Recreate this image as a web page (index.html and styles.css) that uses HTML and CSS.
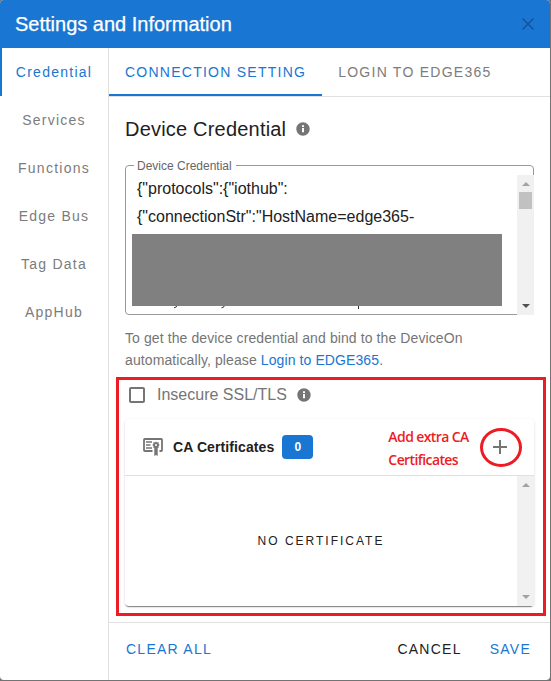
FILE: index.html
```html
<!DOCTYPE html>
<html lang="en">
<head>
<meta charset="utf-8">
<title>Settings and Information</title>
<link rel="stylesheet" href="styles.css">
</head>
<body>
<div class="dialog">
  <header class="titlebar">
    <h1>Settings and Information</h1>
    <svg class="close" width="12" height="12" viewBox="0 0 12 12"><path d="M.5.5l11 11M11.5.5l-11 11"/></svg>
  </header>
  <div class="body">
    <nav class="side">
      <a class="active">Credential</a>
      <a>Services</a>
      <a>Functions</a>
      <a>Edge Bus</a>
      <a>Tag Data</a>
      <a>AppHub</a>
    </nav>
    <main class="main">
      <div class="tabs">
        <a class="tab active">CONNECTION SETTING</a>
        <a class="tab">LOGIN TO EDGE365</a>
      </div>
      <section class="content">
        <h2><span>Device Credential</span>
          <svg class="info" width="16" height="16" viewBox="0 0 24 24"><path d="M12 2C6.48 2 2 6.48 2 12s4.480 10 10 10 10-4.480 10-10S17.520 2 12 2zm1.500 15h-3v-6.500h3zm0-8h-3V6.500h3z"/></svg>
        </h2>
        <div class="field">
          <label>Device Credential</label>
          <div class="value"><div>{"protocols":{"iothub":</div><div>{"connectionStr":"HostName=edge365-</div></div>
          <div class="redacted"></div>
          <svg class="remnants" width="200" height="3" viewBox="0 0 200 3"><path d="M5.500 0v.8L3 1.800M53 0v.8l-2.500 1M187.500 0v3"/></svg>
          <div class="scroll">
            <i class="up"></i><i class="thumb"></i><i class="down dark"></i>
          </div>
        </div>
        <p class="helper">To get the device credential and bind to the DeviceOn<br>automatically, please <a>Login to EDGE365</a>.</p>
        <div class="check"><i class="box"></i><span>Insecure SSL/TLS</span>
          <svg class="info" width="16" height="16" viewBox="0 0 24 24"><path d="M12 2C6.480 2 2 6.480 2 12s4.480 10 10 10 10-4.480 10-10S17.520 2 12 2zm1.500 15h-3v-6.500h3zm0-8h-3V6.500h3z"/></svg>
        </div>
        <div class="card">
          <div class="card-head">
            <svg class="cert" width="20" height="18" viewBox="0 0 20 18"><path class="line" d="M9.500 13H1.800a.8.8 0 0 1-.8-.8V1.800A.8.8 0 0 1 1.800 1H18.200a.8.8 0 0 1 .8.8V12.200a.8.8 0 0 1-.8.8H16.500"/><path class="rows" d="M3 4h6M3 7h4.500M3 10h6"/><path d="M13 3.500l1 1 1.700-.5-.2 1.700 1.200 1.300-1.200 1.300.2 1.700-1-.3V18l-1.700-1-1.700 1V9.700l-1 .3.200-1.700L9.300 7l1.200-1.300L10.300 4l1.700.5z"/><circle cx="13" cy="7" r="1" fill="#fff"/></svg>
            <b>CA Certificates</b><span class="badge">0</span>
            <div class="note">Add extra CA<br>Certificates</div>
            <div class="add"><svg width="14" height="14" viewBox="0 0 14 14"><path d="M7 0v14M0 7h14"/></svg></div>
          </div>
          <div class="card-body"><span>NO CERTIFICATE</span>
            <div class="scroll"><i class="up"></i><i class="down"></i></div>
          </div>
        </div>
      </section>
      <footer><a>CLEAR ALL</a><a class="cancel">CANCEL</a><a>SAVE</a></footer>
    </main>
  </div>
  <div class="highlight"></div>
</div>
</body>
</html>
```

FILE: styles.css
```css
* { box-sizing: border-box; }
body { margin: 0; height: 681px; overflow: hidden; background: #737373; font-family: "Liberation Sans", Arial, sans-serif; }
h1, h2, p { margin: 0; font-weight: 400; }
.dialog { position: relative; width: 550px; height: 680px; background: #fff; border-radius: 4px; overflow: hidden; display: flex; flex-direction: column; }
.titlebar { height: 48px; background: #1976d2; display: flex; align-items: center; justify-content: space-between; padding: 0 16px 0 15px; }
h1 { color: #fff; font-size: 20px; -webkit-text-stroke: .25px #fff; white-space: nowrap; }
.close { fill: none; stroke: #145096; stroke-width: 1.3; }
.body { flex: 1; display: flex; }
.side { width: 109px; border-right: 1px solid #e0e0e0; }
.side a { display: flex; height: 48px; align-items: center; justify-content: center; font-size: 14px; letter-spacing: 1.25px; color: #7c7c7c; }
.side a.active { color: #1976d2; border-left: 2px solid #1976d2; padding-right: 2px; }
.main { flex: 1; display: flex; flex-direction: column; min-width: 0; }
.tabs { height: 49px; display: flex; border-bottom: 1px solid #e0e0e0; }
.tab { height: 48px; padding: 0 16px; display: flex; align-items: center; font-size: 14px; letter-spacing: 1.25px; color: #7c7c7c; white-space: nowrap; }
.tab.active { color: #1976d2; box-shadow: inset 0 -2px #1976d2; }
.content { height: 525px; padding: 16px 16px 0; }
h2 { height: 32px; display: flex; align-items: center; font-size: 20px; letter-spacing: .2px; color: #212121; }
.info { fill: #757575; margin-left: 9px; }
.field { position: relative; height: 150px; width: 409px; margin-top: 20px; border: 1px solid #999; border-radius: 4px; }
.field label { position: absolute; left: 8px; top: -7px; padding: 0 4px 0 3px; background: #fff; font-size: 12px; line-height: 14px; color: #666; white-space: nowrap; }
.value { padding: 9px 0 0 11px; font-size: 16px; line-height: 28px; color: #212121; }
.redacted { position: absolute; left: 6px; top: 68px; width: 370px; height: 72px; background: #808080; }
.remnants { position: absolute; left: 45px; top: 140px; fill: none; stroke: #333; }
.field .scroll { position: absolute; right: -1px; top: 9px; height: 140px; }
.scroll { width: 17px; background: #f1f1f1; display: flex; flex-direction: column; align-items: center; }
.up { border: 4px solid transparent; border-top: 0; border-bottom: 4px solid #a3a3a3; margin-top: 7px; }
.down { border: 4px solid transparent; border-bottom: 0; border-top: 4px solid #a3a3a3; margin: auto 0 7px; }
.down.dark { border-top-color: #505050; }
.thumb { width: 13px; height: 17px; margin-top: 6px; background: #c1c1c1; }
.helper { margin-top: 12px; font-size: 14px; line-height: 22px; letter-spacing: .1px; color: #757575; white-space: nowrap; }
.helper a { color: #1976d2; }
.check { height: 48px; display: flex; align-items: center; padding: 0 0 0 4px; color: #757575; font-size: 16px; }
.box { width: 16px; height: 16px; border: 2px solid #757575; border-radius: 2px; margin-right: 12px; }
.card { width: 409px; height: 187px; border-radius: 4px; box-shadow: 0 2px 1px -1px rgba(0,0,0,.35), 0 1px 1px rgba(0,0,0,.14), 0 1px 3px rgba(0,0,0,.12); }
.card-head { height: 57px; border-bottom: 1px solid #e0e0e0; display: flex; align-items: center; padding-left: 18px; }
.cert { fill: #757575; margin-right: 10px; }
.cert .line, .cert .rows { fill: none; stroke: #757575; stroke-width: 1.8; }
.cert .rows { stroke-width: 1.3; }
.card-head b { font-size: 14px; letter-spacing: .1px; color: #212121; white-space: nowrap; }
.badge { width: 31px; height: 24px; margin-left: 8px; border-radius: 4px; background: #1976d2; color: #fff; font: bold 12px/24px "Liberation Sans", sans-serif; text-align: center; }
.note { margin-left: 75px; width: 92px; padding-top: 1px; font: 600 14px/23px "Open Sans", sans-serif; letter-spacing: -.6px; color: #ed1c24; white-space: nowrap; }
.add { width: 42px; height: 39px; border: 3px solid #ed1c24; border-radius: 50%; display: flex; align-items: center; justify-content: center; }
.add svg { fill: none; stroke: #757575; stroke-width: 2; margin-left: -2px; }
.card-body { height: 130px; display: flex; }
.card-body span { flex: 1; display: flex; align-items: center; justify-content: center; font-size: 12px; letter-spacing: 2px; color: #212121; }
footer { height: 58px; border-top: 1px solid #e0e0e0; padding: 0 19px 6px 17px; display: flex; align-items: center; font-size: 14px; letter-spacing: 1.25px; color: #1976d2; }
.cancel { margin-left: auto; margin-right: 28px; color: #212121; }
.highlight { position: absolute; left: 116px; top: 377px; width: 430px; height: 239px; border: 3px solid #ed1c24; }
```
